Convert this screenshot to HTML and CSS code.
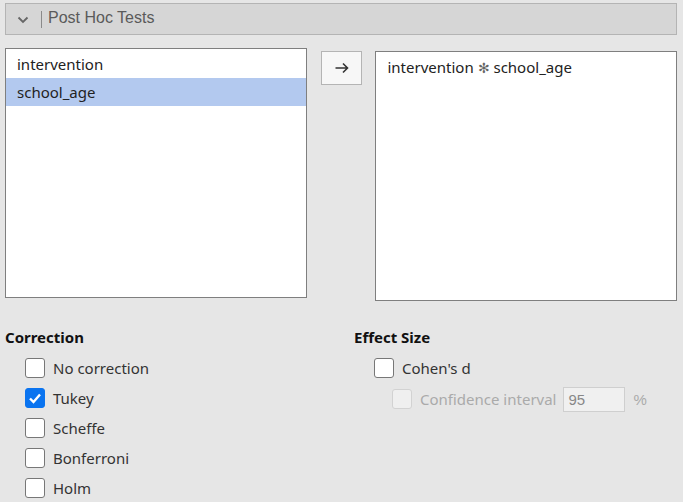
FILE: index.html
```html
<!DOCTYPE html>
<html>
<head>
<meta charset="utf-8">
<link rel="stylesheet" href="styles.css">
</head>
<body>
<div class="panel">
  <div class="header">
    <svg class="chev" width="12" height="8" viewBox="0 0 12 8"><path d="M1.5 1.5 L6 6 L10.5 1.5" fill="none" stroke="#666" stroke-width="1.8"/></svg>
    <span class="sep"></span>
    <span class="title">Post Hoc Tests</span>
  </div>
  <div class="lists">
    <div class="list left">
      <div class="item">intervention</div>
      <div class="item selected">school_age</div>
    </div>
    <div class="btn">
      <svg width="16" height="12" viewBox="0 0 16 12"><path d="M1.5 6 H13.5 M9 1.5 L13.5 6 L9 10.5" fill="none" stroke="#333" stroke-width="1.6"/></svg>
    </div>
    <div class="list right">
      <div class="item">intervention <span class="star">✻</span> school_age</div>
    </div>
  </div>
  <div class="options">
    <div class="col col1">
      <div class="heading">Correction</div>
      <label class="opt"><span class="cb"></span>No correction</label>
      <label class="opt"><span class="cb checked"><svg width="14" height="12" viewBox="0 0 14 12"><path d="M2 6.5 L5.5 10 L12 2.5" fill="none" stroke="#fff" stroke-width="2.4"/></svg></span>Tukey</label>
      <label class="opt"><span class="cb"></span>Scheffe</label>
      <label class="opt"><span class="cb"></span>Bonferroni</label>
      <label class="opt"><span class="cb"></span>Holm</label>
    </div>
    <div class="col col2">
      <div class="heading">Effect Size</div>
      <label class="opt"><span class="cb"></span>Cohen's d</label>
      <label class="opt sub disabled"><span class="cb"></span>Confidence interval<span class="num">95</span><span class="pct">%</span></label>
    </div>
  </div>
</div>
</body>
</html>
```

FILE: styles.css
```css
html, body {
  margin: 0;
  padding: 0;
  background: #e6e6e6;
  width: 683px;
  height: 502px;
  overflow: hidden;
  font-family: "Noto Sans", "Open Sans", sans-serif;
  color: #333;
}
.panel {
  padding: 3px 6px 0 5px;
}
.header {
  height: 30px;
  border: 1px solid #b4b4b4;
  background: #d6d6d6;
  display: flex;
  align-items: center;
}
.chev {
  margin-left: 11px;
  margin-top: 2px;
}
.sep {
  width: 1px;
  height: 17px;
  background: #8a8a8a;
  margin-left: 12px;
}
.title {
  font-family: "Liberation Sans", Arial, sans-serif;
  font-size: 16px;
  color: #5a5a5a;
  margin-left: 6px;
  margin-top: -2px;
}
.lists {
  display: flex;
  align-items: flex-start;
  margin-top: 13px;
}
.list {
  background: #fff;
  border: 1px solid #7f7f7f;
  box-sizing: border-box;
  height: 250px;
  padding-top: 1px;
}
.list.left {
  width: 302px;
}
.list.right {
  width: 302px;
  margin-top: 3px;
  margin-left: 13px;
}
.item {
  height: 28px;
  line-height: 28px;
  padding-left: 11px;
  font-size: 15px;
  color: #222;
}
.item.selected {
  background: #b3c9ef;
}
.star {
  color: #666;
  font-weight: normal;
  font-size: 14px;
}
.btn {
  margin-top: 3px;
  margin-left: 14px;
  width: 42px;
  height: 34px;
  box-sizing: border-box;
  border: 1px solid #b4b4b4;
  background: #f7f7f7;
  display: flex;
  align-items: center;
  justify-content: center;
}
.options {
  display: flex;
  margin-top: 27px;
}
.col1 {
  width: 349px;
}
.heading {
  font-weight: bold;
  font-size: 15px;
  color: #111;
  height: 18px;
  line-height: 18px;
  margin-bottom: 7px;
}
.opt {
  display: flex;
  align-items: center;
  height: 30px;
  font-size: 15px;
  color: #333;
  padding-left: 20px;
}
.cb {
  width: 20px;
  height: 20px;
  box-sizing: border-box;
  border: 1px solid #777;
  border-radius: 3px;
  background: #fff;
  margin-right: 8px;
  display: flex;
  align-items: center;
  justify-content: center;
}
.cb.checked {
  background: #0a74f0;
  border-color: #0a74f0;
}
.opt.sub {
  padding-left: 38px;
  height: 32px;
}
.opt.disabled {
  color: #aaa;
}
.opt.disabled .cb {
  border-color: #d2d2d2;
  background: #efefef;
}
.num {
  margin-left: 6px;
  width: 62px;
  height: 25px;
  box-sizing: border-box;
  border: 1px solid #cfcfcf;
  background: #f0f0f0;
  color: #888;
  font-family: "Liberation Sans", Arial, sans-serif;
  padding-left: 5px;
  line-height: 23px;
}
.pct {
  margin-left: 9px;
  color: #aaa;
  font-family: "Liberation Sans", Arial, sans-serif;
}
```
